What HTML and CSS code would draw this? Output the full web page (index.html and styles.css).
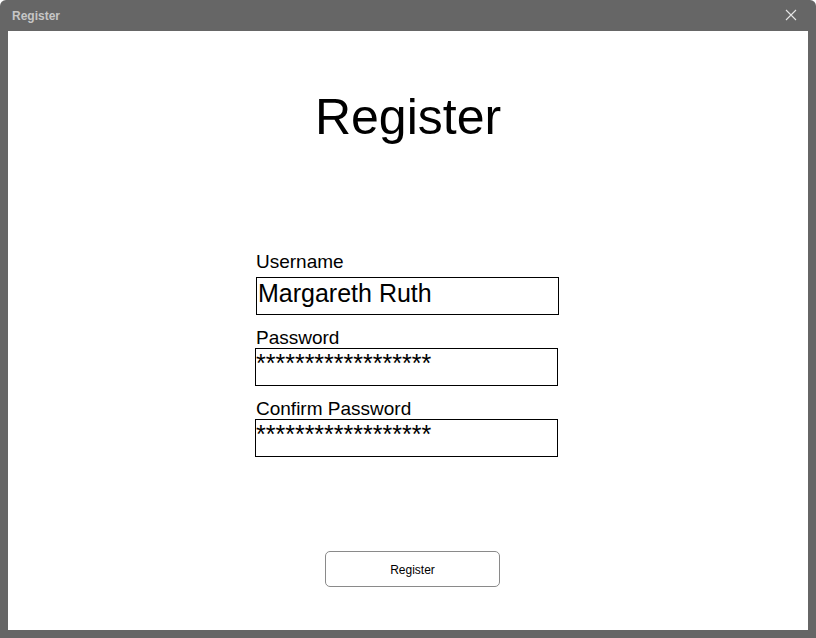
FILE: index.html
```html
<!DOCTYPE html>
<html>
<head>
<meta charset="utf-8">
<link rel="stylesheet" href="styles.css">
</head>
<body>
<div class="window">
  <div class="titlebar">
    <span class="title">Register</span>
    <svg class="close" width="12" height="12" viewBox="0 0 12 12"><path d="M1 1 L11 11 M11 1 L1 11" stroke="#e6e6e6" stroke-width="1.1" fill="none"/></svg>
  </div>
  <div class="content">
    <h1 class="heading">Register</h1>
    <div class="form">
      <div class="label label-user">Username</div>
      <div class="field field-user">Margareth Ruth</div>
      <div class="label label-pass">Password</div>
      <div class="field field-pass">******************</div>
      <div class="label label-confirm">Confirm Password</div>
      <div class="field field-confirm">******************</div>
    </div>
    <div class="actions">
      <div class="button">Register</div>
    </div>
  </div>
</div>
</body>
</html>
```
FILE: styles.css
```css
html, body {
  margin: 0;
  padding: 0;
  background: #ffffff;
}
body {
  font-family: "Liberation Sans", Arial, sans-serif;
  color: #000;
}
.window {
  width: 816px;
  height: 638px;
  background: #666666;
  border-radius: 6px 6px 0 0;
  display: flex;
  flex-direction: column;
  box-sizing: border-box;
}
.titlebar {
  height: 31px;
  display: flex;
  align-items: center;
  justify-content: space-between;
  padding: 0 19px 0 12px;
  box-sizing: border-box;
}
.title {
  font-size: 12px;
  font-weight: bold;
  color: #c6c6c6;
}
.close {
  display: block;
  margin-bottom: 1px;
}
.content {
  margin: 0 8px 8px 8px;
  height: 599px;
  background: #ffffff;
  display: flex;
  flex-direction: column;
}
.heading {
  margin: 56px 0 0 0;
  font-size: 50px;
  font-weight: normal;
  line-height: 60px;
  text-align: center;
}
.form {
  margin-left: 247px;
  margin-top: 105px;
  display: flex;
  flex-direction: column;
  align-items: flex-start;
}
.label {
  font-size: 19px;
  line-height: 20px;
  height: 20px;
  padding-left: 1px;
}
.label-user { margin-bottom: 5px; }
.label-pass { margin-top: 13px; margin-bottom: 0; }
.label-confirm { margin-top: 13px; margin-bottom: 0; }
.field {
  box-sizing: border-box;
  width: 303px;
  height: 38px;
  border: 1px solid #000;
  font-size: 25px;
  line-height: 28px;
  padding-left: 0;
  white-space: nowrap;
  overflow: hidden;
}
.field-user {
  margin-left: 1px;
  padding-left: 1px;
  padding-top: 1px;
}
.actions {
  margin-top: 94px;
  padding-left: 317px;
  display: flex;
}
.button {
  box-sizing: border-box;
  width: 175px;
  height: 36px;
  border: 1px solid #8a8a8a;
  border-radius: 5px;
  display: flex;
  align-items: center;
  justify-content: center;
  font-size: 12px;
  padding-top: 1px;
}
```
